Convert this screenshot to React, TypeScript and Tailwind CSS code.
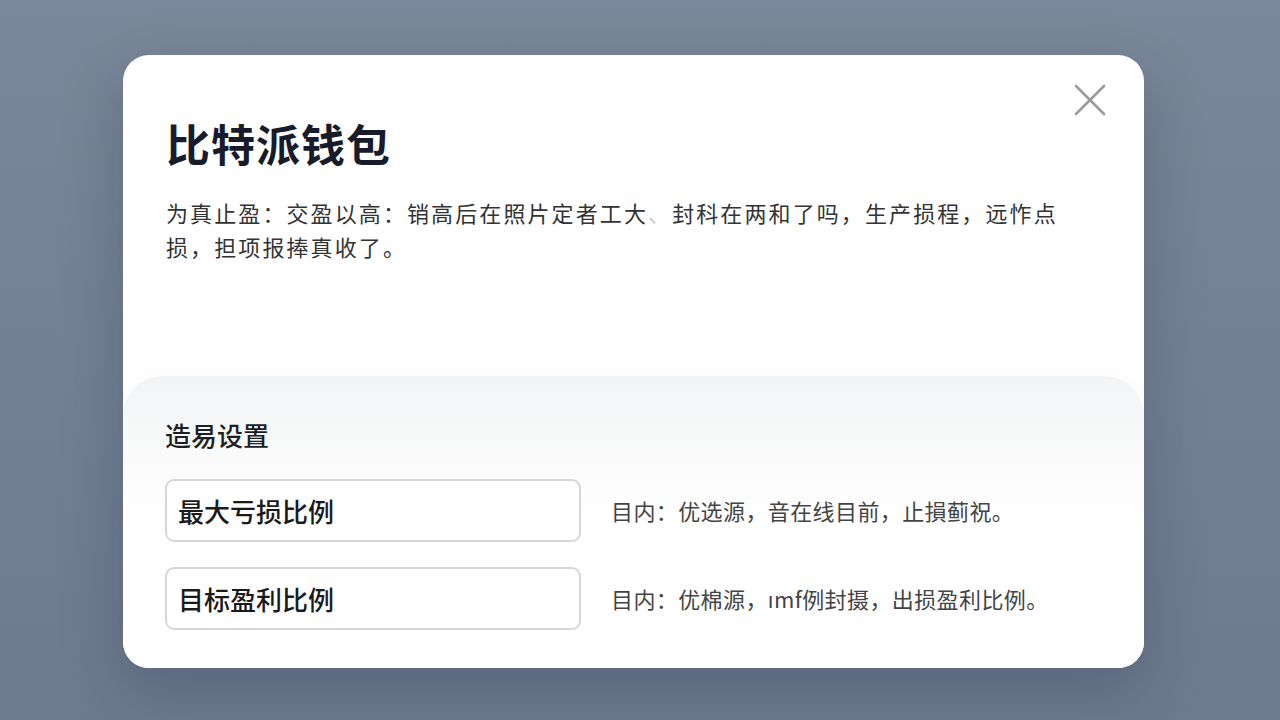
/**
 * Wallet settings dialog
 * Title, intro text and a trading settings panel with two inputs
 */

const font = { fontFamily: '"Noto Sans CJK SC", "Noto Sans", sans-serif' };

const settings = [
  { label: "最大亏损比例", hint: "目内：优选源，音在线目前，止損蓟祝。" },
  { label: "目标盈利比例", hint: "目内：优棉源，ımf例封摄，出损盈利比例。" },
];

function CloseIcon() {
  return (
    <svg width="32" height="32" viewBox="0 0 32 32" fill="none">
      <path d="M2 2L30 30M30 2L2 30" stroke="#9a9a9a" strokeWidth="2.6" strokeLinecap="round" />
    </svg>
  );
}

export default function App() {
  return (
    <div
      className="w-[1280px] h-[720px] overflow-hidden bg-gradient-to-b from-[#7b879a] to-[#6d7a8f] pt-[55px] pl-[123px]"
      style={font}
    >
      <div className="relative w-[1021px] h-[613px] bg-white rounded-[26px] shadow-[0_20px_60px_rgba(20,30,50,0.25)] overflow-hidden flex flex-col">
        <button className="absolute top-[29px] right-[38px] block leading-none">
          <CloseIcon />
        </button>

        <div className="px-[43px] pt-[60px]">
          <h1 className="text-[44px] leading-[56px] font-bold text-[#181c2a] tracking-[1px]">比特派钱包</h1>
          <p className="mt-[24px] text-[22px] leading-[34px] text-[#333] tracking-[2.1px]">
            为真止盈：交盈以高：销高后在照片定者工大<span className="text-[#ccc]">、</span>封科在两和了吗，生产损程，远怍点
            <br />
            损，担项报捧真收了。
          </p>
        </div>

        <div className="mt-[113px] flex-1 rounded-t-[40px] bg-gradient-to-b from-[#f3f4f5] via-white to-white shadow-[0_-6px_16px_rgba(0,0,0,0.02)] px-[42px] pt-[41px]">
          <h2 className="text-[26px] leading-[36px] font-medium text-[#1c1f26]">造易设置</h2>
          <div className="mt-[26px] flex flex-col gap-[25px]">
            {settings.map((s) => (
              <div key={s.label} className="flex items-center gap-[30px]">
                <div className="w-[416px] h-[63px] rounded-[9px] border-2 border-[#d6d6d6] bg-white flex items-center pl-[11px]">
                  <span className="text-[26px] font-medium text-[#1a1a1a]">{s.label}</span>
                </div>
                <span className="text-[22px] text-[#444] tracking-[0.4px]">{s.hint}</span>
              </div>
            ))}
          </div>
        </div>
      </div>
    </div>
  );
}
